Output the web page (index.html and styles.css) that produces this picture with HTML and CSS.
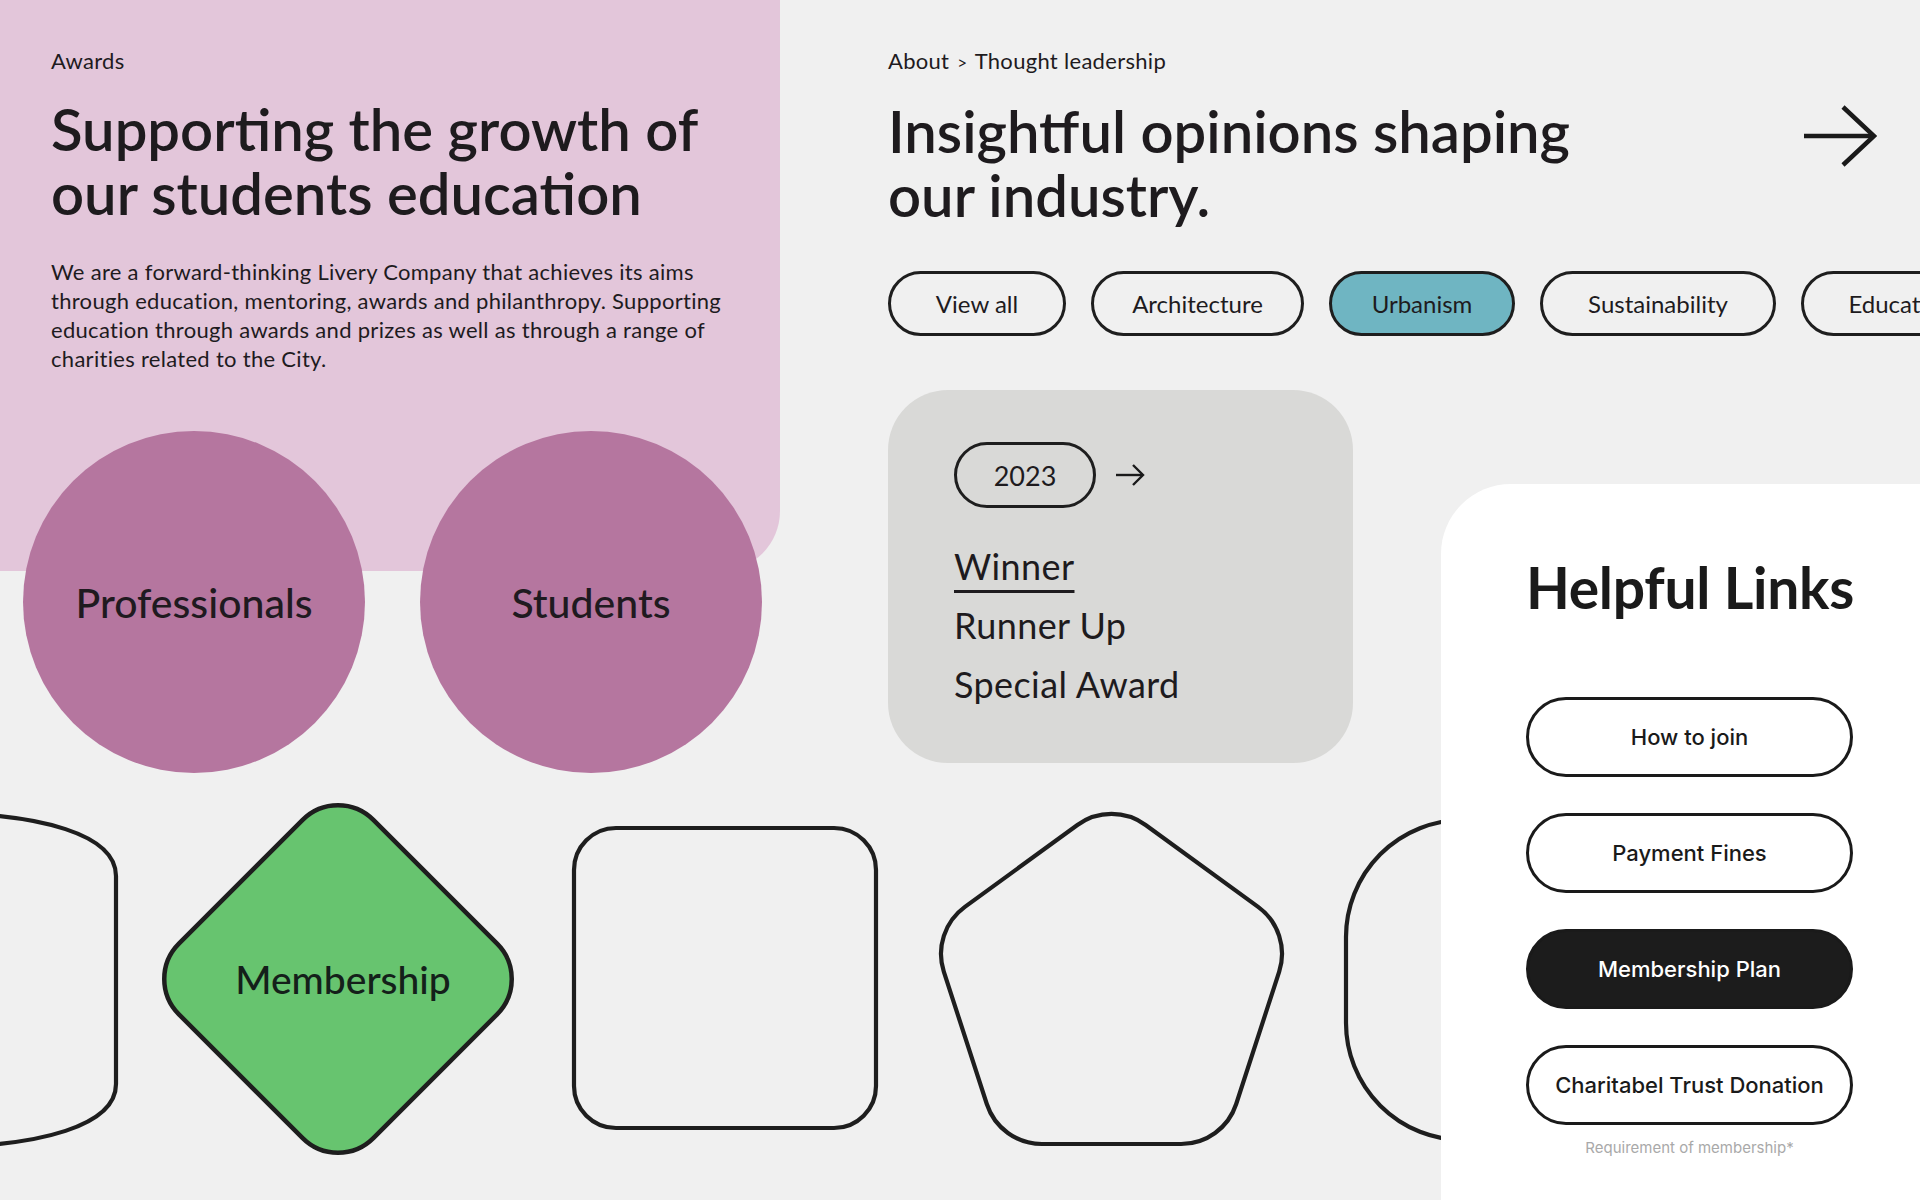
FILE: index.html
```html
<!DOCTYPE html>
<html lang="en">
<head>
<meta charset="utf-8">
<title>Awards &amp; Thought leadership</title>
<link rel="stylesheet" href="styles.css">
</head>
<body>
<main class="page">
  <div class="upper">
    <section class="awards">
      <div class="awards__panel">
        <p class="eyebrow">Awards</p>
        <h1 class="display">Supporting the growth of<br>our students education</h1>
        <p class="lead">We are a forward-thinking Livery Company that achieves its aims<br>through education, mentoring, awards and philanthropy. Supporting<br>education through awards and prizes as well as through a range of<br>charities related to the City.</p>
      </div>
      <div class="audiences">
        <a class="audience" href="#">Professionals</a>
        <a class="audience" href="#">Students</a>
      </div>
    </section>

    <section class="insights">
      <p class="eyebrow">About <span class="crumb-sep">&gt;</span> Thought leadership</p>
      <div class="insights__head">
        <h2 class="display">Insightful opinions shaping<br>our industry.</h2>
        <svg class="big-arrow" width="76" height="66" viewBox="0 0 76 66" aria-hidden="true">
          <path d="M3 33 H73" fill="none" stroke="#1a1a1a" stroke-width="4.5"/>
          <path d="M42 4 L73 33 L42 62" fill="none" stroke="#1a1a1a" stroke-width="4.5"/>
        </svg>
      </div>
      <nav class="chips">
        <a class="chip chip--viewall" href="#">View all</a>
        <a class="chip chip--architecture" href="#">Architecture</a>
        <a class="chip chip--urbanism chip--active" href="#">Urbanism</a>
        <a class="chip chip--sustainability" href="#">Sustainability</a>
        <a class="chip chip--education" href="#">Education</a>
      </nav>
      <div class="award-card">
        <div class="year-row">
          <span class="year-pill">2023</span>
          <svg class="small-arrow" width="30" height="24" viewBox="0 0 30 24" aria-hidden="true">
            <path d="M1 12 H28" fill="none" stroke="#1a1a1a" stroke-width="2.4"/>
            <path d="M18 2 L28 12 L18 22" fill="none" stroke="#1a1a1a" stroke-width="2.4"/>
          </svg>
        </div>
        <ul class="award-list">
          <li class="award-list__item award-list__item--active">Winner</li>
          <li class="award-list__item">Runner Up</li>
          <li class="award-list__item">Special Award</li>
        </ul>
      </div>
    </section>
  </div>

  <div class="shapes">
    <svg class="shape shape--edge" width="124" height="350" viewBox="0 0 124 350" aria-hidden="true">
      <path d="M-60 9 C40 10 116 30 116 72 L116 280 C116 322 40 342 -60 343" fill="none" stroke="#1e1e1e" stroke-width="4.2"/>
    </svg>
    <div class="shape shape--diamond">
      <svg width="360" height="360" viewBox="0 0 360 360" aria-hidden="true">
        <rect x="42.5" y="42.5" width="275" height="275" rx="50" transform="rotate(45 180 180)" fill="#67c46f" stroke="#1e1e1e" stroke-width="4.5"/>
      </svg>
      <span class="shape__label">Membership</span>
    </div>
    <svg class="shape shape--square" width="310" height="310" viewBox="0 0 310 310" aria-hidden="true">
      <rect x="4" y="4" width="302" height="300" rx="42" fill="none" stroke="#1e1e1e" stroke-width="4.2"/>
    </svg>
    <svg class="shape shape--pentagon" width="350" height="340" viewBox="0 0 350 340" aria-hidden="true">
      <path d="M208.6 16 L321.1 97.9 A58 58 0 0 1 342.2 162.6 L299.2 295 A58 58 0 0 1 244.1 335 L104.9 335 A58 58 0 0 1 49.8 295 L6.8 162.6 A58 58 0 0 1 27.9 97.9 L140.4 16 A58 58 0 0 1 208.6 16 Z" fill="none" stroke="#1e1e1e" stroke-width="4.2"/>
    </svg>
    <svg class="shape shape--round" width="130" height="330" viewBox="0 0 130 330" aria-hidden="true">
      <rect x="4" y="6" width="400" height="320" rx="117" fill="none" stroke="#1e1e1e" stroke-width="4.2"/>
    </svg>
  </div>

  <aside class="links">
    <h2 class="links__title">Helpful Links</h2>
    <div class="links__list">
      <a class="link-btn" href="#">How to join</a>
      <a class="link-btn" href="#">Payment Fines</a>
      <a class="link-btn link-btn--dark" href="#">Membership Plan</a>
      <a class="link-btn" href="#">Charitabel Trust Donation</a>
    </div>
    <p class="links__note">Requirement of membership*</p>
  </aside>
</main>
</body>
</html>
```

FILE: styles.css
```css
* { box-sizing: border-box; }

html, body {
  margin: 0;
  padding: 0;
}

body {
  background: #f0f0f0;
  font-family: Lato, "Noto Sans", sans-serif;
  color: #1e1b1e;
}

.page {
  position: relative;
  width: 1920px;
  height: 1200px;
  overflow: hidden;
}

a { color: inherit; text-decoration: none; }

/* ---------- upper area ---------- */
.upper {
  display: flex;
  height: 799px;
}

.awards {
  width: 780px;
  flex: none;
}

.awards__panel {
  height: 571px;
  background: #e3c6da;
  border-bottom-right-radius: 60px;
  padding: 49px 0 0 51px;
}

.eyebrow {
  margin: 0;
  font-size: 22px;
  line-height: 24px;
  font-weight: 400;
  letter-spacing: 0.3px;
}

.crumb-sep {
  font-size: 17px;
  padding: 0 2px;
}

.display {
  margin: 24px 0 0;
  font-size: 58px;
  line-height: 64px;
  font-weight: 600;
  letter-spacing: 0;
}

.lead {
  margin: 32px 0 0;
  font-size: 22px;
  line-height: 29px;
  letter-spacing: 0.3px;
}

.audiences {
  display: flex;
  gap: 55px;
  margin-top: -140px;
  padding-left: 23px;
}

.audience {
  width: 342px;
  height: 342px;
  border-radius: 50%;
  background: #b5769f;
  display: flex;
  align-items: center;
  justify-content: center;
  font-size: 41px;
  font-weight: 500;
  color: #1f1a20;
}

/* ---------- insights ---------- */
.insights {
  margin-left: 108px;
  width: 1032px;
  flex: none;
  padding-top: 49px;
}

.insights__head {
  display: flex;
  justify-content: space-between;
  align-items: flex-start;
  padding-right: 43px;
}

.big-arrow {
  margin-top: 28px;
  flex: none;
}

.chips {
  display: flex;
  gap: 25px;
  margin-top: 44px;
}

.chip {
  flex: none;
  height: 65px;
  border: 3px solid #1e1e1e;
  border-radius: 33px;
  display: flex;
  align-items: center;
  justify-content: center;
  font-size: 24px;
  white-space: nowrap;
}

.chip--viewall { width: 178px; }
.chip--architecture { width: 213px; }
.chip--urbanism { width: 186px; }
.chip--sustainability { width: 236px; }
.chip--education { width: 200px; }

.chip--active {
  background: #6fb5c2;
}

.award-card {
  margin-top: 54px;
  width: 465px;
  height: 373px;
  border-radius: 60px;
  background: #d9d9d7;
  padding: 52px 0 0 66px;
}

.year-row {
  display: flex;
  align-items: center;
  gap: 19px;
}

.year-pill {
  width: 142px;
  height: 66px;
  border: 3px solid #1e1e1e;
  border-radius: 33px;
  display: flex;
  align-items: center;
  justify-content: center;
  font-size: 27px;
}

.award-list {
  list-style: none;
  margin: 29px 0 0;
  padding: 0;
}

.award-list__item {
  font-size: 36px;
  line-height: 59px;
  letter-spacing: 0.4px;
}

.award-list__item--active {
  text-decoration: underline;
  text-decoration-thickness: 3px;
  text-underline-offset: 10px;
}

/* ---------- shapes ---------- */
.shapes {
  display: flex;
  align-items: center;
  height: 360px;
}

.shape { flex: none; display: block; }

.shape--diamond {
  margin-left: 34px;
  display: grid;
  width: 360px;
  height: 360px;
}

.shape--diamond > svg,
.shape--diamond > .shape__label {
  grid-area: 1 / 1;
}

.shape__label {
  align-self: center;
  justify-self: center;
  font-size: 39px;
  font-weight: 500;
  color: #14201a;
  padding-left: 10px;
}

.shape--square { margin-left: 52px; }
.shape--pentagon { margin-left: 57px; }
.shape--round { margin-left: 55px; }

/* ---------- helpful links ---------- */
.links {
  position: absolute;
  left: 1441px;
  top: 484px;
  right: 0;
  bottom: 0;
  background: #ffffff;
  border-top-left-radius: 70px;
  padding: 68px 0 0 85px;
  font-family: Inter, "Noto Sans", sans-serif;
}

.links__title {
  margin: 0;
  width: 327px;
  text-align: center;
  white-space: nowrap;
  font-family: Lato, "Noto Sans", sans-serif;
  font-size: 57px;
  line-height: 70px;
  font-weight: 700;
  letter-spacing: -0.3px;
  color: #1a1a1a;
}

.links__list {
  margin-top: 75px;
  display: flex;
  flex-direction: column;
  gap: 36px;
  width: 327px;
}

.link-btn {
  height: 80px;
  border: 3px solid #1a1a1a;
  border-radius: 40px;
  display: flex;
  align-items: center;
  justify-content: center;
  font-size: 22px;
  font-weight: 500;
  color: #1a1a1a;
  white-space: nowrap;
}

.link-btn--dark {
  background: #1c1c1c;
  color: #ffffff;
}

.links__note {
  margin: 13px 0 0;
  width: 327px;
  text-align: center;
  font-size: 15px;
  line-height: 20px;
  color: #a9a9a9;
}
```
